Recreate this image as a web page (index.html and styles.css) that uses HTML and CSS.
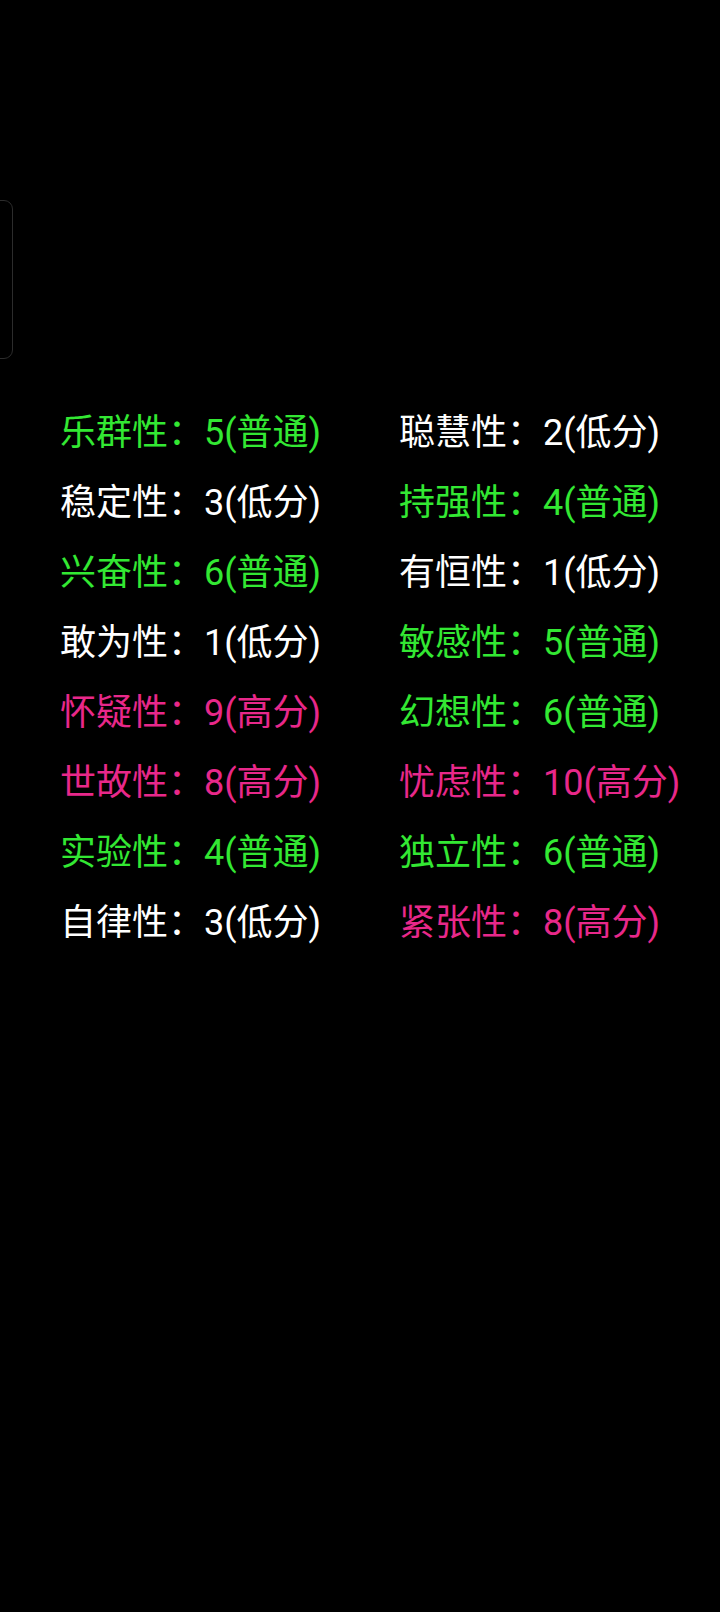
FILE: index.html
```html
<!DOCTYPE html>
<html lang="zh">
<head>
<meta charset="utf-8">
<link rel="stylesheet" href="styles.css">
</head>
<body>
<div class="screen">
  <div class="side-handle"></div>
  <div class="traits">
    <div class="trait green">乐群性：5(普通)</div>
    <div class="trait white">聪慧性：2(低分)</div>
    <div class="trait white">稳定性：3(低分)</div>
    <div class="trait green">持强性：4(普通)</div>
    <div class="trait green">兴奋性：6(普通)</div>
    <div class="trait white">有恒性：1(低分)</div>
    <div class="trait white">敢为性：1(低分)</div>
    <div class="trait green">敏感性：5(普通)</div>
    <div class="trait pink">怀疑性：9(高分)</div>
    <div class="trait green">幻想性：6(普通)</div>
    <div class="trait pink">世故性：8(高分)</div>
    <div class="trait pink">忧虑性：10(高分)</div>
    <div class="trait green">实验性：4(普通)</div>
    <div class="trait green">独立性：6(普通)</div>
    <div class="trait white">自律性：3(低分)</div>
    <div class="trait pink">紧张性：8(高分)</div>
  </div>
</div>
</body>
</html>
```
FILE: styles.css
```css
html, body {
  margin: 0;
  padding: 0;
  background: #000;
}
.screen {
  position: relative;
  width: 720px;
  height: 1612px;
  background: #000;
  overflow: hidden;
  font-family: Roboto, "Noto Sans CJK SC", sans-serif;
}
.side-handle {
  position: absolute;
  left: -20px;
  top: 200px;
  width: 31px;
  height: 157px;
  border: 1.5px solid #2c2c2c;
  border-radius: 9px;
}
.traits {
  display: grid;
  grid-template-columns: 339px 1fr;
  padding: 398px 0 0 60px;
}
.trait {
  font-size: 36px;
  line-height: 70px;
  height: 70px;
  white-space: nowrap;
}
.green { color: #33e833; }
.white { color: #ffffff; }
.pink { color: #e8288a; }
```
